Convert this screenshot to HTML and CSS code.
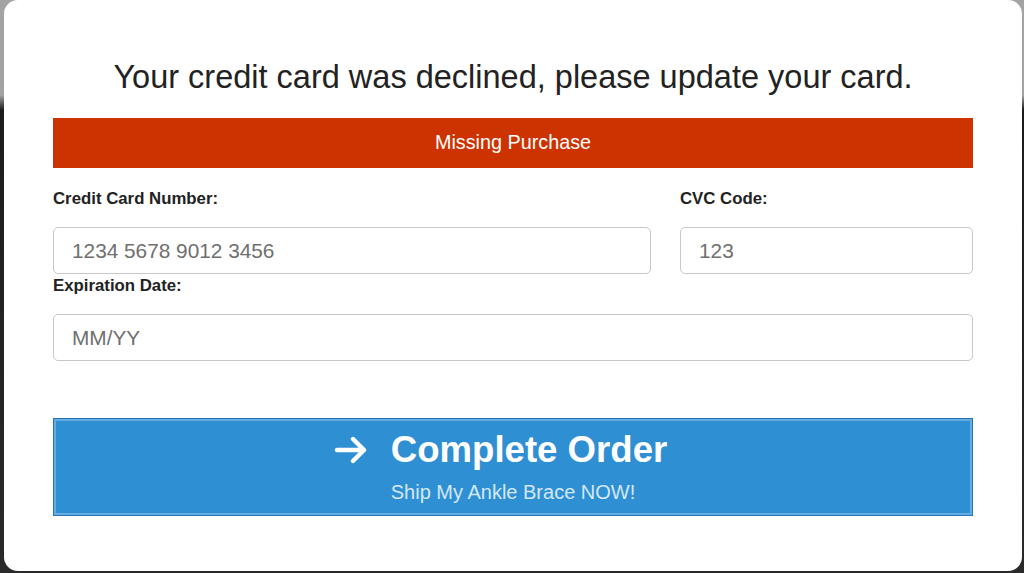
FILE: index.html
```html
<!DOCTYPE html>
<html lang="en">
<head>
<meta charset="utf-8">
<title>Update your card</title>
<link rel="stylesheet" href="styles.css">
</head>
<body>
<div class="modal">
  <h1 class="title">Your credit card was declined, please update your card.</h1>
  <div class="alert">Missing Purchase</div>
  <form class="form">
    <div class="grid">
      <div class="field">
        <label class="label">Credit Card Number:</label>
        <input class="input" type="text" placeholder="1234 5678 9012 3456">
      </div>
      <div class="field">
        <label class="label">CVC Code:</label>
        <input class="input" type="text" placeholder="123">
      </div>
      <div class="field wide">
        <label class="label tight">Expiration Date:</label>
        <input class="input" type="text" placeholder="MM/YY">
      </div>
    </div>
    <button class="btn" type="button">
      <span class="btn-main">
        <svg class="arrow" width="34" height="28" viewBox="0 0 34 28"><path d="M3 14 H30 M19 3 L30 14 L19 25" fill="none" stroke="#fff" stroke-width="4.4" stroke-linecap="round" stroke-linejoin="round"/></svg>
        <span>Complete Order</span>
      </span>
      <span class="btn-sub">Ship My Ankle Brace NOW!</span>
    </button>
  </form>
</div>
</body>
</html>
```
FILE: styles.css
```css
* { box-sizing: border-box; }
html, body { margin: 0; height: 100%; }
body {
  background: linear-gradient(#a3a3a3 0, #a3a3a3 95px, #1c1c1c 110px, #2a2a2a 100%);
  font-family: "Liberation Sans", Arial, sans-serif;
  padding: 0 2px 2px 4px;
  overflow: hidden;
}
.modal {
  width: 1018px;
  height: 571px;
  background: #fff;
  border-radius: 14px;
  padding: 58px 49px 0;
}
.title {
  margin: 0;
  font-size: 32.5px;
  line-height: 38px;
  font-weight: normal;
  color: #222;
  text-align: center;
}
.alert {
  margin-top: 22px;
  height: 50px;
  line-height: 48px;
  background: #cc3300;
  color: #fff;
  text-align: center;
  font-size: 19.8px;
}
.form { margin-top: 21px; }
.grid {
  display: grid;
  grid-template-columns: 598px 293px;
  column-gap: 29px;
  row-gap: 2px;
}
.field { display: flex; flex-direction: column; }
.wide { grid-column: 1 / -1; }
.label {
  font-size: 16.8px;
  line-height: 20px;
  font-weight: bold;
  color: #222;
  margin-bottom: 18px;
}
.input {
  height: 47px;
  border: 1px solid #c8c8c8;
  border-radius: 5px;
  padding: 0 18px;
  font-family: inherit;
  font-size: 20.8px;
  color: #333;
  background: #fff;
  outline: none;
}
.input::placeholder { color: #6f6f6f; }
.btn {
  margin-top: 57px;
  width: 920px;
  height: 98px;
  background: #2f8fd3;
  border: 1px solid #2474b6;
  box-shadow: inset 0 0 0 2px #66abe2;
  display: flex;
  flex-direction: column;
  align-items: center;
  padding: 10px 0 0;
  font-family: inherit;
  cursor: pointer;
}
.btn-main {
  display: flex;
  align-items: center;
  gap: 23px;
  color: #fff;
  font-size: 36.6px;
  font-weight: bold;
  line-height: 42px;
  margin-left: -25px;
}
.arrow { display: block; margin-top: 0; }
.btn-sub {
  margin-top: 10px;
  font-size: 20px;
  line-height: 22px;
  color: #d3e8f8;
}
```
